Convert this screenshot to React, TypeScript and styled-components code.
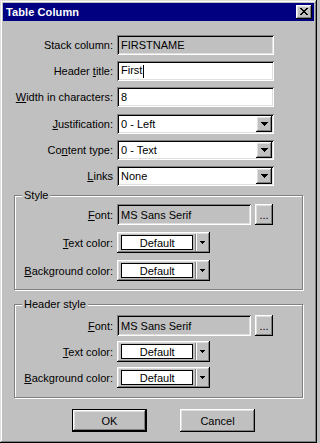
import styled, { createGlobalStyle } from 'styled-components';

const face = '#c0c0c0';
const shadow = '#808080';
const light = '#dfdfdf';

const raised = `box-shadow: inset -1px -1px #000, inset 1px 1px #fff, inset -2px -2px ${shadow}, inset 2px 2px ${light};`;
const sunken = `box-shadow: inset 1px 1px ${shadow}, inset -1px -1px #fff, inset 2px 2px #000, inset -2px -2px ${light};`;

const GlobalStyle = createGlobalStyle`
  html, body {
    margin: 0;
    padding: 0;
    background: ${face};
  }
  body {
    font-family: 'Liberation Sans', Arial, sans-serif;
    font-size: 11px;
    color: #000;
  }
`;

const Window = styled.div`
  box-sizing: border-box;
  width: 317px;
  height: 443px;
  padding: 3px;
  background: ${face};
  box-shadow: inset -1px -1px #000, inset 1px 1px ${light}, inset -2px -2px ${shadow}, inset 2px 2px #fff;
  display: flex;
  flex-direction: column;
`;

const TitleBar = styled.div`
  height: 18px;
  flex-shrink: 0;
  background: #000080;
  display: flex;
  align-items: center;
  justify-content: space-between;
  padding: 0 2px 0 3px;
`;

const Title = styled.span`
  color: #fff;
  font-weight: bold;
  font-size: 11px;
  letter-spacing: 0.1px;
`;

const CloseButton = styled.button`
  width: 16px;
  height: 14px;
  padding: 0 1px 1px 0;
  border: 0;
  background: ${face};
  ${raised}
  display: flex;
  align-items: center;
  justify-content: center;
`;

const FormGrid = styled.div<{ $label: number; $gap: number }>`
  display: grid;
  grid-template-columns: ${(p) => p.$label}px auto;
  column-gap: 4px;
  row-gap: ${(p) => p.$gap}px;
  align-items: center;
  justify-content: start;
`;

const MainForm = styled(FormGrid)`
  padding-top: 14px;
`;

const Label = styled.span`
  text-align: right;
  white-space: nowrap;
`;

const Key = styled.span`
  text-decoration: underline;
  text-underline-offset: 1px;
`;

const Field = styled.div<{ $readOnly?: boolean; $width: number; $height?: number; $nudge?: number }>`
  box-sizing: border-box;
  width: ${(p) => p.$width}px;
  height: ${(p) => p.$height ?? 20}px;
  margin-top: ${(p) => p.$nudge ?? 0}px;
  padding: 0 2px 0 4px;
  display: flex;
  align-items: center;
  justify-content: space-between;
  white-space: nowrap;
  background: ${(p) => (p.$readOnly ? face : '#fff')};
  ${sunken}
`;

const Caret = styled.span`
  display: inline-block;
  width: 1px;
  height: 13px;
  margin-left: 1px;
  background: #000;
  vertical-align: middle;
`;

const DropButton = styled.span`
  width: 16px;
  height: 16px;
  flex-shrink: 0;
  display: flex;
  align-items: center;
  justify-content: center;
  background: ${face};
  ${raised}
`;

const Group = styled.fieldset<{ $top: number; $pad: string }>`
  box-sizing: border-box;
  width: 289px;
  min-inline-size: 0;
  margin: ${(p) => p.$top}px 0 0 11px;
  padding: ${(p) => p.$pad};
  border: 1px solid ${shadow};
  box-shadow: inset 1px 1px #fff, 1px 1px #fff;
`;

const Legend = styled.legend`
  margin-left: 7px;
  padding: 0 2px;
  line-height: 12px;
  background: ${face};
`;

const FieldRow = styled.div`
  display: flex;
  gap: 4px;
`;

const SmallButton = styled.button`
  box-sizing: border-box;
  width: 18px;
  height: 21px;
  padding: 0 0 4px;
  border: 0;
  background: ${face};
  font: inherit;
  line-height: 1;
  display: flex;
  align-items: flex-end;
  justify-content: center;
  ${raised}
`;

const ColorButton = styled.button`
  box-sizing: border-box;
  width: 93px;
  height: 21px;
  padding: 3px 0 3px 4px;
  border: 0;
  background: ${face};
  font: inherit;
  display: flex;
  align-items: stretch;
  ${raised}
`;

const Swatch = styled.span`
  box-sizing: border-box;
  width: 75px;
  border: 1px solid #000;
  background: #fff;
  display: flex;
  align-items: center;
  justify-content: center;
`;

const Separator = styled.span`
  width: 1px;
  margin: -1px 0 -1px 2px;
  background: ${shadow};
  border-right: 1px solid #fff;
`;

const ArrowSlot = styled.span`
  width: 11px;
  display: flex;
  align-items: center;
  justify-content: center;
  padding-right: 2px;
`;

const ButtonRow = styled.div`
  display: flex;
  gap: 33px;
  padding-left: 69px;
  margin-top: 11px;
`;

const PushButton = styled.button<{ $default?: boolean }>`
  width: 75px;
  height: 23px;
  padding: 0;
  border: 0;
  background: ${face};
  font: inherit;
  color: #000;
  box-shadow: ${(p) =>
    p.$default
      ? `inset 0 0 0 1px #000, inset -2px -2px #000, inset 2px 2px #fff, inset -3px -3px ${shadow}, inset 3px 3px ${light}`
      : `inset -1px -1px #000, inset 1px 1px #fff, inset -2px -2px ${shadow}, inset 2px 2px ${light}`};
`;

function CloseGlyph() {
  const rows = ['11000011', '01100110', '00111100', '00011000', '00111100', '01100110', '11000011'];
  return (
    <svg width="8" height="7" viewBox="0 0 8 7" shapeRendering="crispEdges">
      {rows.flatMap((row, y) =>
        row.split('').map((c, x) => (c === '1' ? <rect key={`${x}-${y}`} x={x} y={y} width="1" height="1" fill="#000" /> : null)),
      )}
    </svg>
  );
}

function DownArrow({ size }: { size: 7 | 5 }) {
  const d = size === 7 ? 'M0 0h7v1h-1v1h-1v1h-1v1h-1v-1h-1v-1h-1v-1h-1z' : 'M0 0h5v1h-1v1h-1v1h-1v-1h-1v-1h-1z';
  return (
    <svg width={size} height={size === 7 ? 4 : 3} viewBox={`0 0 ${size} ${size === 7 ? 4 : 3}`} shapeRendering="crispEdges">
      <path d={d} fill="#000" />
    </svg>
  );
}

function Combo({ value, nudge }: { value: string; nudge?: number }) {
  return (
    <Field $width={157} $nudge={nudge}>
      <span>{value}</span>
      <DropButton>
        <DownArrow size={7} />
      </DropButton>
    </Field>
  );
}

function ColorPicker({ value }: { value: string }) {
  return (
    <ColorButton>
      <Swatch>{value}</Swatch>
      <Separator />
      <ArrowSlot>
        <DownArrow size={5} />
      </ArrowSlot>
    </ColorButton>
  );
}

function StyleGroup({ title, top, pad, gap }: { title: string; top: number; pad: string; gap: number }) {
  return (
    <Group $top={top} $pad={pad}>
      <Legend>{title}</Legend>
      <FormGrid $label={98} $gap={gap}>
        <Label>
          <Key>F</Key>ont:
        </Label>
        <FieldRow>
          <Field $readOnly $width={134} $height={21}>
            MS Sans Serif
          </Field>
          <SmallButton>...</SmallButton>
        </FieldRow>
        <Label>
          <Key>T</Key>ext color:
        </Label>
        <ColorPicker value="Default" />
        <Label>
          <Key>B</Key>ackground color:
        </Label>
        <ColorPicker value="Default" />
      </FormGrid>
    </Group>
  );
}

export default function App() {
  return (
    <>
      <GlobalStyle />
      <Window>
        <TitleBar>
          <Title>Table Column</Title>
          <CloseButton aria-label="Close">
            <CloseGlyph />
          </CloseButton>
        </TitleBar>

        <MainForm $label={110} $gap={6}>
          <Label>Stack column:</Label>
          <Field $readOnly $width={157}>
            FIRSTNAME
          </Field>
          <Label>
            Header <Key>t</Key>itle:
          </Label>
          <Field $width={157}>
            <span>
              First
              <Caret />
            </span>
          </Field>
          <Label>
            <Key>W</Key>idth in characters:
          </Label>
          <Field $width={157}>8</Field>
          <Label>
            <Key>J</Key>ustification:
          </Label>
          <Combo value="0 - Left" nudge={1} />
          <Label>
            Co<Key>n</Key>tent type:
          </Label>
          <Combo value="0 - Text" />
          <Label>
            <Key>L</Key>inks
          </Label>
          <Combo value="None" />
        </MainForm>

        <StyleGroup title="Style" top={3} pad="3px 0 8px" gap={7} />
        <StyleGroup title="Header style" top={8} pad="5px 0 9px" gap={5} />

        <ButtonRow>
          <PushButton $default>OK</PushButton>
          <PushButton>Cancel</PushButton>
        </ButtonRow>
      </Window>
    </>
  );
}
